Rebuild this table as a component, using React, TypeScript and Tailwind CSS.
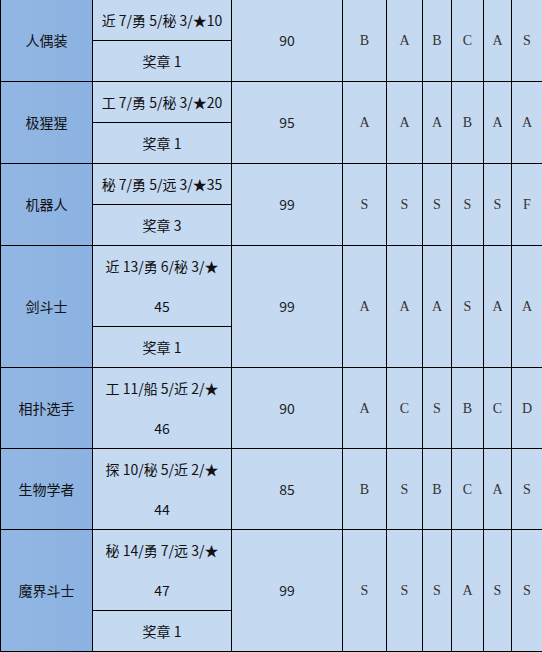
import React from 'react'

interface Job {
  name: string
  req: string[]
  medal?: string
  score: number
  grades: string[]
}

const jobs: Job[] = [
  { name: '人偶装', req: ['近 7/勇 5/秘 3/★10'], medal: '奖章 1', score: 90, grades: ['B', 'A', 'B', 'C', 'A', 'S'] },
  { name: '极猩猩', req: ['工 7/勇 5/秘 3/★20'], medal: '奖章 1', score: 95, grades: ['A', 'A', 'A', 'B', 'A', 'A'] },
  { name: '机器人', req: ['秘 7/勇 5/远 3/★35'], medal: '奖章 3', score: 99, grades: ['S', 'S', 'S', 'S', 'S', 'F'] },
  { name: '剑斗士', req: ['近 13/勇 6/秘 3/★', '45'], medal: '奖章 1', score: 99, grades: ['A', 'A', 'A', 'S', 'A', 'A'] },
  { name: '相扑选手', req: ['工 11/船 5/近 2/★', '46'], score: 90, grades: ['A', 'C', 'S', 'B', 'C', 'D'] },
  { name: '生物学者', req: ['探 10/秘 5/近 2/★', '44'], score: 85, grades: ['B', 'S', 'B', 'C', 'A', 'S'] },
  { name: '魔界斗士', req: ['秘 14/勇 7/远 3/★', '47'], medal: '奖章 1', score: 99, grades: ['S', 'S', 'S', 'A', 'S', 'S'] },
]

function JobRows({ job }: { job: Job }) {
  const span = job.medal ? 'row-span-2' : 'row-span-1'
  return (
    <>
      <div className={`${span} flex items-center justify-center bg-gradient-to-r from-[#92b7e4] to-[#8cb2e1] text-[14px] text-[#111]`}>
        {job.name}
      </div>
      <div className="flex flex-col items-center justify-center bg-[#c5d9f1] text-[14px] text-[#111]">
        {job.req.map((line, i) => (
          <div key={i} className="leading-[40px] whitespace-nowrap">{line}</div>
        ))}
      </div>
      <div className={`${span} flex items-center justify-center bg-[#c5d9f1] text-[14px] text-[#222]`}>
        {job.score}
      </div>
      {job.grades.map((g, i) => (
        <div key={i} className={`${span} flex items-center justify-center bg-[#c5d9f1] font-['Liberation_Serif',serif] text-[14px] text-[#333]`}>
          {g}
        </div>
      ))}
      {job.medal && (
        <div className="flex items-center justify-center bg-[#c5d9f1] text-[14px] text-[#111]">
          {job.medal}
        </div>
      )}
    </>
  )
}

export default function App() {
  return (
    <div className="w-[542px] h-[652px] overflow-hidden bg-white font-['Noto_Sans_CJK_SC','Noto_Sans',sans-serif]">
      <div className="bg-black pl-px pb-px">
        <div className="grid grid-cols-[91px_138px_110px_43px_35px_28px_31px_27px_1fr] grid-rows-[40px_40px_40px_40px_40px_40px_80px_40px_80px_80px_80px_40px] gap-px">
          {jobs.map((job) => (
            <JobRows key={job.name} job={job} />
          ))}
        </div>
      </div>
    </div>
  )
}
